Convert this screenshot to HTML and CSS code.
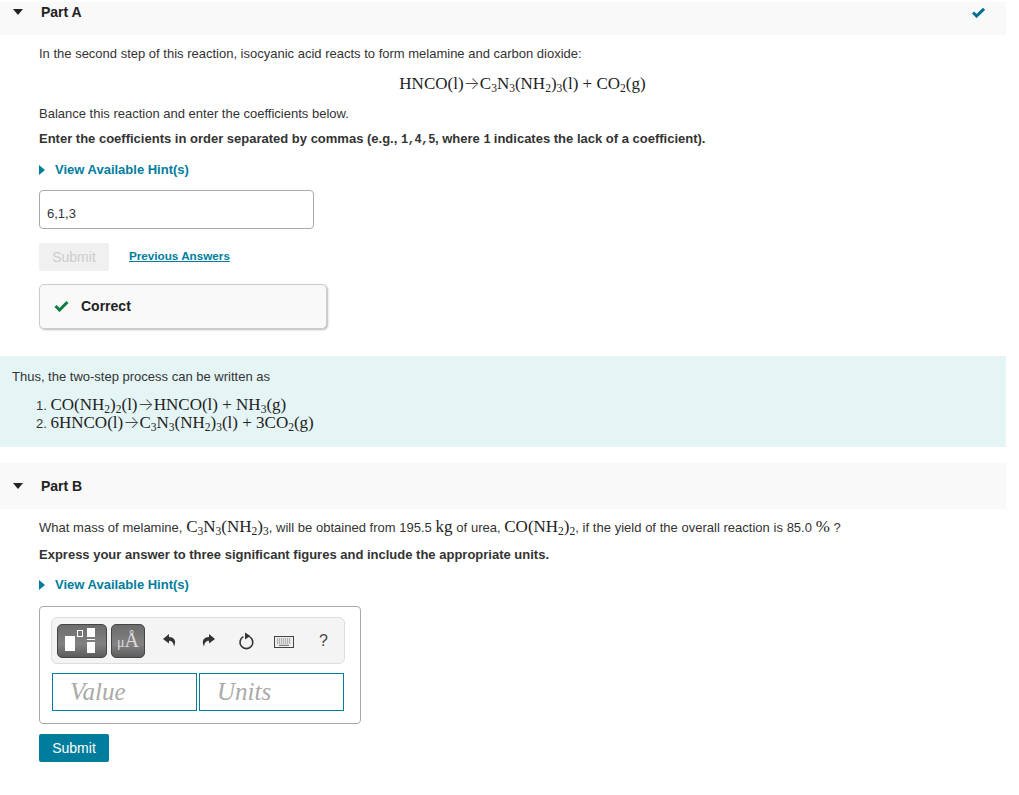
FILE: index.html
```html
<!DOCTYPE html>
<html lang="en">
<head>
<meta charset="utf-8">
<title>Part A and Part B</title>
<link rel="stylesheet" href="styles.css">
</head>
<body>
<main class="page">
  <header class="part-head part-head-a">
    <span class="caret-down"></span>
    <h2 class="part-title">Part A</h2>
    <svg class="done-check" width="13" height="11" viewBox="0 0 13 11"><path d="M1 5.5 L4.6 9 L12 1.8" fill="none" stroke="#00708c" stroke-width="3"/></svg>
  </header>
  <section class="part-body">
    <p class="line intro">In the second step of this reaction, isocyanic acid reacts to form melamine and carbon dioxide:</p>
    <p class="equation"><span class="math">HNCO(l)<span class="arrow">→</span>C<sub>3</sub>N<sub>3</sub>(NH<sub>2</sub>)<sub>3</sub>(l) + CO<sub>2</sub>(g)</span></p>
    <p class="line balance">Balance this reaction and enter the coefficients below.</p>
    <p class="line strong enter">Enter the coefficients in order separated by commas (e.g., <code class="mono">1,4,5</code>, where <code class="mono">1</code> indicates the lack of a coefficient).</p>
    <p class="hint hint-a"><span class="caret-right"></span><a class="hint-link">View Available Hint(s)</a></p>
    <div class="answer-input">6,1,3</div>
    <div class="actions">
      <button class="btn btn-disabled">Submit</button>
      <a class="prev-link">Previous Answers</a>
    </div>
    <div class="feedback">
      <svg class="correct-check" width="15" height="12" viewBox="0 0 15 12"><path d="M1.5 6 L5.5 10 L13.5 2" fill="none" stroke="#0b7d3e" stroke-width="3"/></svg>
      <span>Correct</span>
    </div>
  </section>
  <section class="explain">
    <p class="explain-text">Thus, the two-step process can be written as</p>
    <ol class="steps">
      <li><span class="math">CO(NH<sub>2</sub>)<sub>2</sub>(l)<span class="arrow">→</span>HNCO(l) + NH<sub>3</sub>(g)</span></li>
      <li><span class="math">6HNCO(l)<span class="arrow">→</span>C<sub>3</sub>N<sub>3</sub>(NH<sub>2</sub>)<sub>3</sub>(l) + 3CO<sub>2</sub>(g)</span></li>
    </ol>
  </section>
  <header class="part-head part-head-b">
    <span class="caret-down"></span>
    <h2 class="part-title">Part B</h2>
  </header>
  <section class="part-body">
    <p class="line question">What mass of melamine, <span class="math">C<sub>3</sub>N<sub>3</sub>(NH<sub>2</sub>)<sub>3</sub></span>, will be obtained from 195.5 <span class="math">kg</span> of urea, <span class="math">CO(NH<sub>2</sub>)<sub>2</sub></span>, if the yield of the overall reaction is 85.0 <span class="math">%</span> ?</p>
    <p class="line strong express">Express your answer to three significant figures and include the appropriate units.</p>
    <p class="hint hint-b"><span class="caret-right"></span><a class="hint-link">View Available Hint(s)</a></p>
    <div class="answer-box">
      <div class="toolbar">
        <div class="tool-btn tool-templates">
          <svg width="34" height="26" viewBox="0 0 34 26"><rect x="0" y="8" width="10" height="15" fill="#fff"/><rect x="12.5" y="2.5" width="5" height="6" fill="none" stroke="#fff" stroke-width="1"/><rect x="22" y="0" width="8" height="9" fill="#fff"/><rect x="22" y="11" width="8" height="1" fill="#fff"/><rect x="22" y="14" width="8" height="11" fill="#fff"/></svg>
        </div>
        <div class="tool-btn tool-units"><span class="mu">μ</span><span class="ang">Å</span></div>
        <svg class="tool-icon undo" width="15" height="15" viewBox="0 0 15 15"><path d="M7 1 L1 6 L7 10.5 V7.8 C10 7.8 11.6 9.6 12 13.5 C14.6 8 12.6 4.2 7 4 Z" fill="#333"/></svg>
        <svg class="tool-icon redo" width="15" height="15" viewBox="0 0 15 15"><path d="M8 1 L14 6 L8 10.5 V7.8 C5 7.8 3.4 9.6 3 13.5 C.4 8 2.4 4.2 8 4 Z" fill="#333"/></svg>
        <svg class="tool-icon reset" width="17" height="18" viewBox="0 0 17 18"><path d="M11.4 4.6 A6.4 6.4 0 1 1 5.4 4.6" fill="none" stroke="#333" stroke-width="1.6"/><path d="M7 0.5 L12.4 4 L7 7.5 Z" fill="#333"/></svg>
        <svg class="tool-icon keyboard" width="20" height="12" viewBox="0 0 20 12"><rect x=".5" y=".5" width="19" height="11" fill="#eee" stroke="#444"/><path d="M3 3 H17 M3 5 H17 M3 7 H17" stroke="#777" stroke-width="1" stroke-dasharray="1.2 .8"/><path d="M5 9.3 H15" stroke="#666" stroke-width="1"/></svg>
        <span class="tool-help">?</span>
      </div>
      <div class="value-row">
        <div class="value-field">Value</div>
        <div class="value-field">Units</div>
      </div>
    </div>
    <button class="btn btn-primary">Submit</button>
  </section>
</main>
</body>
</html>
```

FILE: styles.css
```css
* { box-sizing: border-box; }
html, body { margin: 0; padding: 0; background: #fff; }
body { font-family: "Liberation Sans", Arial, sans-serif; font-size: 13px; color: #333; }
.page { width: 1006px; padding-top: 2px; height: 795px; overflow: hidden; }
p, h2, ol { margin: 0; padding: 0; }

.part-head { display: flex; align-items: center; background: #f9f9f9; padding-left: 13px; position: relative; }
.part-head-a { height: 33px; padding-bottom: 14px; }
.part-head-b { height: 46px; margin-top: 16px; }
.part-title { font-size: 14px; font-weight: bold; color: #222; margin-left: 18px; line-height: 16px; }
.caret-down { width: 0; height: 0; border-left: 5px solid transparent; border-right: 5px solid transparent; border-top: 6px solid #222; }
.done-check { position: absolute; left: 972px; top: 5px; }

.part-body { padding-left: 39px; }
.line { line-height: 16px; font-size: 13px; }
.intro { margin-top: 11px; }
.equation { text-align: center; margin-top: 10px; height: 24px; line-height: 24px; }
.math { font-family: "Liberation Serif", "DejaVu Serif", serif; font-size: 17px; color: #222; }
.math sub { font-size: 11.5px; line-height: 0; vertical-align: -3px; }
.arrow { font-family: Inter, "DejaVu Sans", sans-serif; font-size: 17px; font-weight: 200; line-height: 0; }
.balance { margin-top: 10px; }
.strong { font-weight: bold; }
.enter { margin-top: 9px; }
.mono { font-family: "Liberation Mono", monospace; font-size: 12px; letter-spacing: -.4px; }
.hint { display: flex; align-items: center; line-height: 16px; }
.hint-a { margin-top: 14px; }
.hint-b { margin-top: 14px; }
.caret-right { width: 0; height: 0; border-top: 5px solid transparent; border-bottom: 5px solid transparent; border-left: 6px solid #007d9c; margin-right: 10px; }
.hint-link { font-size: 13px; font-weight: bold; color: #007d9c; }

.answer-input { width: 275px; height: 39px; margin-top: 12px; border: 1px solid #aaa; border-radius: 4px; padding-left: 7px; font-size: 13px; line-height: 45px; }
.actions { display: flex; align-items: center; margin-top: 14px; height: 28px; }
.btn { width: 70px; height: 28px; border: 0; border-radius: 2px; font: 14px "Liberation Sans", Arial, sans-serif; padding: 0; }
.btn-disabled { background: #f0f0f0; color: #ccc; }
.btn-primary { display: block; background: #007d9c; color: #fff; margin-top: 10px; }
.prev-link { margin: 0 0 4px 20px; font-size: 11.7px; font-weight: bold; color: #007d9c; text-decoration: underline; }
.feedback { display: flex; align-items: center; width: 288px; height: 45px; margin-top: 13px; background: #f9f9f9; border: 1px solid #ccc; border-radius: 5px; box-shadow: 1px 1px 2px #bbb; padding: 0 0 2px 14px; font-size: 14px; font-weight: bold; color: #222; }
.correct-check { margin-right: 12px; }

.explain { height: 91px; margin-top: 27px; background: #e5f5f6; padding: 13px 0 0 12px; }
.explain-text { line-height: 16px; font-size: 13px; }
.steps { margin-top: 11px; list-style: none; counter-reset: step; padding-left: 24px; font-size: 13px; }
.steps li { counter-increment: step; line-height: 18px; height: 18px; }
.steps li::before { content: counter(step) ". "; }

.question { margin-top: 7px; line-height: 22px; word-spacing: .12px; }
.express { margin-top: 8px; }
.answer-box { width: 322px; height: 118px; margin-top: 13px; border: 1px solid #aaa; border-radius: 4px; padding: 10px 15px 0 11px; }
.toolbar { display: flex; align-items: center; width: 294px; height: 47px; background: #f4f4f4; border: 1px solid #ddd; border-radius: 6px; padding-left: 5px; }
.tool-btn { display: flex; align-items: center; justify-content: center; height: 34px; border-radius: 5px; border: 1px solid #444; background: linear-gradient(#6c6c6c, #828282 60%, #5c5c5c); }
.tool-templates { width: 50px; }
.tool-units { width: 34px; margin-left: 4px; color: #ddd; font-family: "Liberation Serif", serif; }
.mu { font-size: 14px; margin-top: 4px; }
.ang { font-size: 20px; }
.tool-icon { flex: none; }
.undo { margin-left: 17px; }
.redo { margin-left: 24px; }
.reset { margin-left: 22px; }
.keyboard { margin-left: 19px; margin-top: 2px; }
.tool-help { margin-left: 25px; font-size: 16px; color: #444; }
.value-row { display: flex; gap: 2px; margin-top: 9px; padding-left: 1px; }
.value-field { width: 145px; height: 38px; border: 1px solid #007d9c; padding-left: 17px; font: italic 25px/36px "Liberation Serif", serif; color: #aaa; }
```
